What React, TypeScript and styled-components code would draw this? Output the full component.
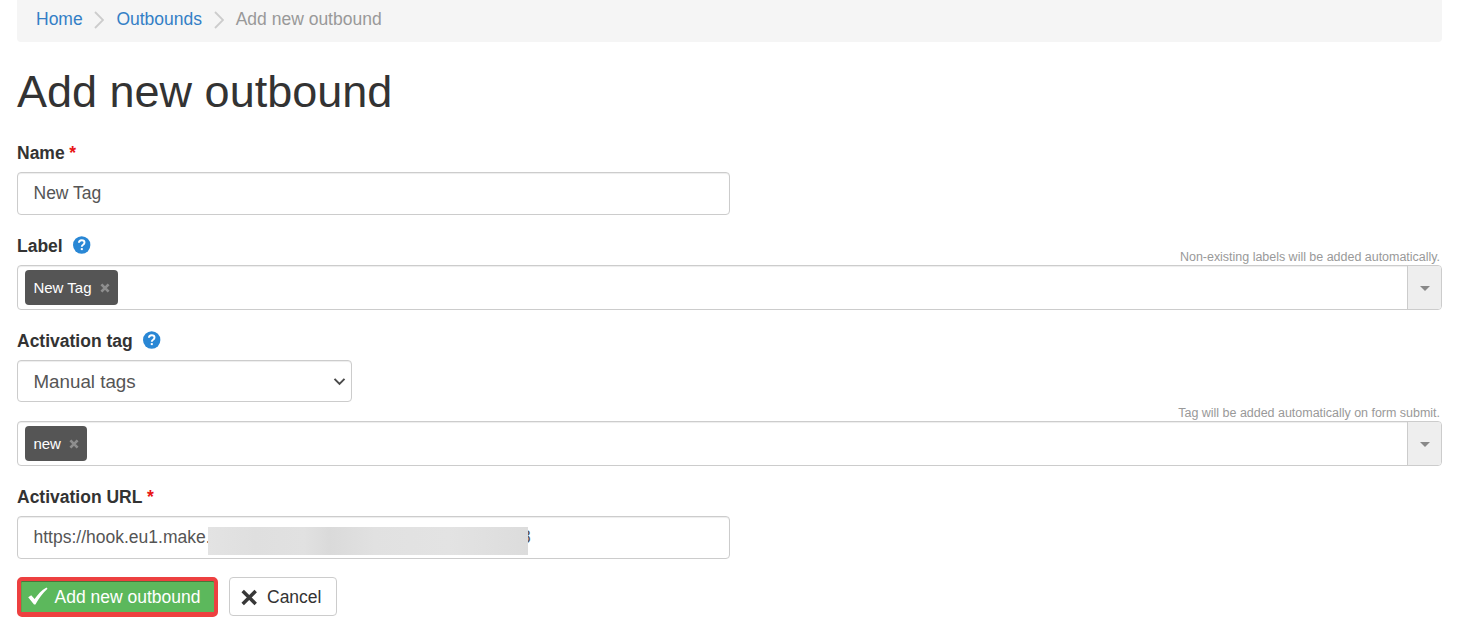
import React from "react";
import styled, { createGlobalStyle } from "styled-components";

const GlobalStyle = createGlobalStyle`
	* {
		box-sizing: border-box;
	}

	body {
		margin: 0;
		background: #ffffff;
		color: #333333;
		font-family: "Liberation Sans", Arial, sans-serif;
		font-size: 17.5px;
		line-height: 25px;
	}
`

const Page = styled.main`
	display: flex;
	flex-direction: column;
	width: 1442px;
	height: 628px;
	padding-left: 17px;
	overflow: hidden;
`

const Breadcrumb = styled.nav`
	display: flex;
	align-items: flex-start;
	height: 42px;
	padding: 7px 19px 0;
	background: #f5f5f5;
	border-radius: 0 0 4px 4px;
	color: #999999;

	a {
		color: #337fc6;
		text-decoration: none;
	}

	svg {
		margin: 4px 12px 0 11.7px;
	}
`

const Title = styled.h1`
	margin: 20px 0 0;
	height: 60px;
	font-size: 45px;
	font-weight: 400;
	line-height: 60px;
`

const Form = styled.form`
	display: flex;
	flex-direction: column;
	padding-top: 19px;
`

const Group = styled.div`
	display: flex;
	flex-direction: column;
	margin-bottom: 19px;
`

const LabelRow = styled.div`
	display: flex;
	justify-content: space-between;
	height: 31px;
`

const Label = styled.label`
	display: flex;
	height: 25px;
	font-weight: 700;

	svg {
		margin: 2px 0 0 10px;
	}
`

const Required = styled.span`
	margin-left: 4.6px;
	color: #e81515;
`

const Hint = styled.span`
	align-self: flex-end;
	margin: 0 0 -1px auto;
	padding-right: 2px;
	color: #999999;
	font-size: 12.5px;
	letter-spacing: -0.02px;
	line-height: 17px;
`

const SelectHint = styled.div`
	display: flex;
	height: 19px;
`

const field = `
	border: 1px solid #cccccc;
	border-radius: 4px;
	background: #ffffff;
	box-shadow: inset 0 1px 1px rgba(0, 0, 0, 0.075);
	color: #555555;
`

const Input = styled.div`
	${field}
	display: flex;
	align-items: center;
	width: 713px;
	height: 43px;
	padding: 0 15.5px 1px;
`

const Redacted = styled.span`
	position: relative;
	z-index: 1;
	flex: none;
	width: 320px;
	height: 28px;
	margin: 8px -7px 0 -2.5px;
	background: linear-gradient(90deg, #e3e3e3 0%, #dfdfdf 15%, #e1e1e1 30%, #dadada 38%, #e1e1e1 52%, #e3e3e3 75%, #dfdfdf 90%, #dcdcdc 100%);
`

const Select = styled.div`
	${field}
	display: flex;
	align-items: center;
	justify-content: space-between;
	width: 335px;
	height: 42px;
	padding: 0 5px 0 15.5px;
	font-size: 18.75px;
`

const Combo = styled.div`
	${field}
	display: flex;
	height: 45px;
	overflow: hidden;
	padding-left: 7px;
`

const Tag = styled.span`
	display: flex;
	align-items: center;
	height: 35px;
	margin-top: 4px;
	padding: 0 8.2px 0 8.4px;
	background: #555555;
	border-radius: 4px;
	color: #ffffff;
	font-size: 15px;

	svg {
		margin: 1px 0 0 8.3px;
	}
`

const Toggle = styled.span`
	display: flex;
	align-items: center;
	justify-content: center;
	width: 34px;
	margin-left: auto;
	background: #eeeeee;
	border-left: 1px solid #cccccc;

	svg {
		margin: 1px 0 0 1px;
	}
`

const Actions = styled.div`
	display: flex;
	align-items: flex-start;
	gap: 11px;
	margin-top: -1px;
`

const Button = styled.button`
	display: flex;
	align-items: center;
	gap: 9.5px;
	width: 108px;
	height: 39px;
	padding: 1px 0 0 10.5px;
	background: #ffffff;
	border: 1px solid #cccccc;
	border-radius: 4px;
	color: #333333;
	font: inherit;
	white-space: nowrap;
`

const PrimaryButton = styled(Button)`
	gap: 7px;
	width: 201px;
	height: 40px;
	padding: 2px 0 0 6.5px;
	background: #5cb85c;
	border: 4px solid #ed4040;
	border-bottom-width: 5px;
	border-radius: 5px;
	box-shadow: inset 0 1px 0 #46793a, inset 1px 0 0 #62a14f;
	color: #ffffff;

	svg {
		margin-top: -2px;
	}
`

const Separator = () => (
	<svg width="10" height="18" viewBox="0 0 10 18" fill="none" stroke="#cccccc" strokeWidth="1.8">
		<path d="M1 1l8 8-8 8" />
	</svg>
)

const HelpIcon = () => (
	<svg width="18" height="18" viewBox="0 0 18 18" fill="none">
		<circle cx="8.7" cy="9" r="8.7" fill="#2987d5" />
		<path d="M5.900 6.800C6 4.900 7.100 4.200 8.700 4.200c1.700 0 2.800.9 2.800 2.200 0 1.100-.6 1.700-1.400 2.300-.9.6-1.300 1-1.300 2" stroke="#ffffff" strokeWidth="1.9" />
		<path d="M7.800 12.100h2v2h-2z" fill="#ffffff" />
	</svg>
)

const RemoveIcon = () => (
	<svg width="10" height="10" viewBox="0 0 10 10" stroke="#8e8e8e" strokeWidth="2.7">
		<path d="M1.400 1.400l7.200 7.200M8.600 1.400L1.400 8.600" />
	</svg>
)

const Caret = () => (
	<svg width="10" height="5" viewBox="0 0 10 5">
		<path d="M0 0h10L5 5z" fill="#888888" />
	</svg>
)

const SelectArrow = () => (
	<svg width="13" height="9" viewBox="0 0 13 9" fill="none" stroke="#4a4a4a" strokeWidth="2">
		<path d="M1.500 1.900l5 5 5-5" />
	</svg>
)

const CheckIcon = () => (
	<svg width="20" height="19" viewBox="0 0 20 19" fill="#ffffff">
		<path d="M.2 10.200l3-2 3.400 3.900C9.800 7.500 13.500 3.300 18.500.6l1 1.100C14.500 6 11 11.200 7.400 17.400H6z" />
	</svg>
)

const CancelIcon = () => (
	<svg width="17" height="17" viewBox="0 0 17 17" stroke="#383838" strokeWidth="3.500">
		<path d="M1.700 2l13 13M14.700 2l-13 13" />
	</svg>
)

interface TagBoxProps {
	value: string;
}

const TagBox: React.FunctionComponent<TagBoxProps> = ({ value }: TagBoxProps) => (
	<Combo>
		<Tag>{value}<RemoveIcon /></Tag>
		<Toggle><Caret /></Toggle>
	</Combo>
)

export default function App() {
	return (
		<>
			<GlobalStyle />
			<Page>
				<Breadcrumb>
					<a href="#home">Home</a>
					<Separator />
					<a href="#outbounds">Outbounds</a>
					<Separator />
					<span>Add new outbound</span>
				</Breadcrumb>
				<Title>Add new outbound</Title>
				<Form onSubmit={(e) => e.preventDefault()}>
					<Group>
						<LabelRow>
							<Label>Name<Required>*</Required></Label>
						</LabelRow>
						<Input>New Tag</Input>
					</Group>
					<Group>
						<LabelRow>
							<Label>Label<HelpIcon /></Label>
							<Hint>Non-existing labels will be added automatically.</Hint>
						</LabelRow>
						<TagBox value="New Tag" />
					</Group>
					<Group>
						<LabelRow>
							<Label>Activation tag<HelpIcon /></Label>
						</LabelRow>
						<Select>
							Manual tags
							<SelectArrow />
						</Select>
						<SelectHint>
							<Hint>Tag will be added automatically on form submit.</Hint>
						</SelectHint>
						<TagBox value="new" />
					</Group>
					<Group>
						<LabelRow>
							<Label>Activation URL<Required>*</Required></Label>
						</LabelRow>
						<Input>
							<span>https://hook.eu1.make.</span>
							<Redacted />
							<span>8</span>
						</Input>
					</Group>
					<Actions>
						<PrimaryButton type="submit">
							<CheckIcon />
							Add new outbound
						</PrimaryButton>
						<Button type="button">
							<CancelIcon />
							Cancel
						</Button>
					</Actions>
				</Form>
			</Page>
		</>
	)
}
